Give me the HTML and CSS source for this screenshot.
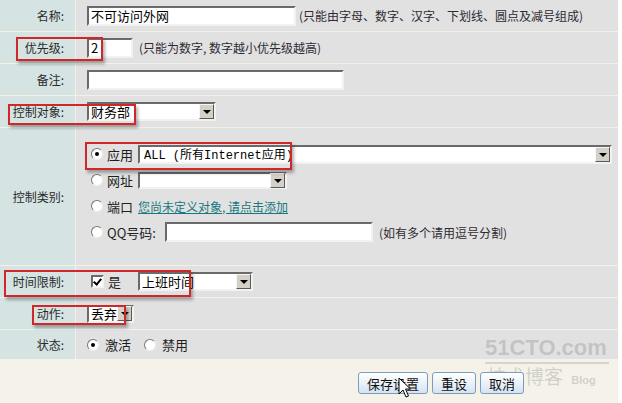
FILE: index.html
```html
<!DOCTYPE html>
<html lang="zh-CN">
<head>
  <meta charset="UTF-8">
  <title>规则设置</title>
  <link rel="stylesheet" href="styles.css">
</head>
<body>
  <div class="panel">
    <div class="form">
      <div class="row">
        <div class="label">名称:</div>
        <div class="field">
          <div class="input w-name">不可访问外网</div>
          <span class="hint">(只能由字母、数字、汉字、下划线、圆点及减号组成)</span>
        </div>
      </div>

      <div class="row">
        <div class="label">优先级:</div>
        <div class="field">
          <div class="input w-prio">2</div>
          <span class="hint gap">(只能为数字, 数字越小优先级越高)</span>
        </div>
      </div>

      <div class="row">
        <div class="label">备注:</div>
        <div class="field">
          <div class="input w-note"></div>
        </div>
      </div>

      <div class="row">
        <div class="label">控制对象:</div>
        <div class="field">
          <div class="select w-obj"><span class="val">财务部</span><span class="arrow"></span></div>
        </div>
      </div>

      <div class="row row-type">
        <div class="label">控制类别:</div>
        <div class="field stack">
          <div class="line">
            <span class="radio on"></span><span class="opt">应用</span>
            <div class="select w-app"><span class="val mono">ALL (所有Internet应用)</span><span class="arrow"></span></div>
          </div>
          <div class="line">
            <span class="radio"></span><span class="opt">网址</span>
            <div class="select w-url"><span class="val"></span><span class="arrow"></span></div>
          </div>
          <div class="line">
            <span class="radio"></span><span class="opt">端口</span>
            <a href="#" class="link">您尚未定义对象, 请点击添加</a>
          </div>
          <div class="line">
            <span class="radio"></span><span class="opt">QQ号码:</span>
            <div class="input w-qq"></div>
            <span class="hint gap">(如有多个请用逗号分割)</span>
          </div>
        </div>
      </div>

      <div class="row">
        <div class="label">时间限制:</div>
        <div class="field">
          <span class="check"></span><span class="opt">是</span>
          <div class="select w-time"><span class="val">上班时间</span><span class="arrow"></span></div>
        </div>
      </div>

      <div class="row">
        <div class="label">动作:</div>
        <div class="field">
          <div class="select w-act"><span class="val">丢弃</span><span class="arrow"></span></div>
        </div>
      </div>

      <div class="row row-last">
        <div class="label">状态:</div>
        <div class="field">
          <span class="radio on"></span><span class="opt wide">激活</span>
          <span class="radio"></span><span class="opt wide">禁用</span>
        </div>
      </div>
    </div>

    <div class="watermark">
      <div class="wm-big">51CTO.com</div>
      <div class="wm-small">技术博客 <span>Blog</span></div>
    </div>

    <div class="footer">
      <button class="btn">保存设置</button>
      <button class="btn">重设</button>
      <button class="btn">取消</button>
    </div>

    <!-- red marks drawn over the screenshot -->
    <div class="mark m1"></div>
    <div class="mark m2"></div>
    <div class="mark m3"></div>
    <div class="mark m4"></div>
    <div class="mark m5"></div>

    <svg class="cursor" width="14" height="22" viewBox="0 0 14 22">
      <path d="M1 1 L1 17 L5 13 L8 20 L10.5 19 L7.5 12 L12.5 12 Z" fill="#fff" stroke="#000" stroke-width="1"/>
    </svg>
  </div>
</body>
</html>
```

FILE: styles.css
```css
* {
  margin: 0;
  padding: 0;
  box-sizing: border-box;
}

body {
  background-color: #ffffff;
  font-family: "Noto Sans CJK SC", "DejaVu Sans", sans-serif;
  font-size: 12px;
  color: #262626;
}

.panel {
  position: relative;
  width: 618px;
  height: 403px;
}

.row {
  display: grid;
  grid-template-columns: 76px 1fr;
  height: 32px;
  border-bottom: 1px solid #f1f1e6;
}

.row-type {
  height: 138px;
}

.row-last {
  height: 29px;
  border-bottom: none;
}

.label {
  background-color: #d5e3e3;
  border-right: 1px solid #eef2ee;
  display: flex;
  align-items: center;
  justify-content: flex-end;
  padding-right: 11px;
  color: #2a2a2a;
}

.field {
  background-color: #e1e1e1;
  display: flex;
  align-items: center;
  padding-left: 11px;
}

.stack {
  flex-direction: column;
  align-items: flex-start;
  justify-content: flex-start;
  padding-top: 13px;
  padding-left: 15px;
}

.line {
  display: flex;
  align-items: center;
  height: 26px;
}

.hint {
  margin-left: 3px;
  color: #2e2a33;
}

.hint.gap {
  margin-left: 6px;
}

.input {
  height: 20px;
  background-color: #fff;
  border: 2px solid;
  border-color: #6a6a6a #f2f2f2 #f2f2f2 #6a6a6a;
  padding-left: 2px;
  line-height: 15px;
  font-size: 13px;
  color: #000;
  white-space: nowrap;
}

.w-name { width: 209px; }
.w-prio { width: 46px; }
.w-note { width: 257px; }
.w-qq { width: 208px; margin-left: 4px; }

.select {
  display: flex;
  align-items: center;
  height: 19px;
  background-color: #fff;
  border: 2px solid;
  border-color: #6a6a6a #f2f2f2 #f2f2f2 #6a6a6a;
  color: #000;
}

.select .val {
  flex: 1;
  padding-left: 2px;
  font-size: 13px;
  white-space: nowrap;
  overflow: hidden;
}

.select .mono {
  font-family: "Liberation Mono", "Noto Sans CJK SC", monospace;
  font-size: 12px;
  padding-left: 4px;
}

.arrow {
  position: relative;
  width: 15px;
  height: 15px;
  background-color: #d4d0c8;
  border: 1px solid;
  border-color: #f6f6f6 #5a5a5a #5a5a5a #f6f6f6;
}

.arrow::after {
  content: "";
  position: absolute;
  left: 3px;
  top: 5px;
  border-left: 4px solid transparent;
  border-right: 4px solid transparent;
  border-top: 4px solid #000;
}

.w-obj { width: 129px; }
.w-app { width: 474px; }
.w-url { width: 149px; height: 17px; }
.w-time { width: 115px; margin-left: 12px; }
.w-act { width: 47px; height: 18px; }

.radio {
  position: relative;
  width: 12px;
  height: 12px;
  border-radius: 50%;
  background-color: #fff;
  border: 1px solid;
  border-color: #777 #eee #eee #777;
}

.radio.on::after {
  content: "";
  position: absolute;
  left: 3px;
  top: 3px;
  width: 4px;
  height: 4px;
  border-radius: 50%;
  background-color: #000;
}

.check {
  position: relative;
  width: 13px;
  height: 13px;
  margin-left: 4px;
  background-color: #fff;
  border: 2px solid;
  border-color: #6a6a6a #f2f2f2 #f2f2f2 #6a6a6a;
}

.check::after {
  content: "";
  position: absolute;
  left: 2px;
  top: 0;
  width: 3px;
  height: 6px;
  border-right: 2px solid #000;
  border-bottom: 2px solid #000;
  transform: rotate(40deg);
}

.opt {
  margin-left: 4px;
  margin-right: 5px;
  font-size: 13px;
  color: #1e1e1e;
}

.opt.wide {
  margin-left: 6px;
  margin-right: 13px;
}

.link {
  color: #17787f;
  text-decoration: underline;
  font-size: 12px;
}

.footer {
  height: 44px;
  background-color: #f5f3e9;
  display: flex;
  justify-content: flex-end;
  align-items: center;
  gap: 4px;
  padding-right: 94px;
  padding-top: 4px;
}

.btn {
  position: relative;
  z-index: 1;
  height: 22px;
  padding: 0 8px;
  font-family: "Noto Sans CJK SC", sans-serif;
  font-size: 13px;
  color: #111;
  border: 1px solid #7d9cbd;
  border-radius: 3px;
  background: linear-gradient(#ffffff, #d6e3f1);
}

.mark {
  position: absolute;
  border: 2px solid #d0282a;
  box-shadow: 2px 3px 3px rgba(0, 0, 0, 0.3);
}

.m1 { left: 16px; top: 37px; width: 87px; height: 24px; }
.m2 { left: 8px; top: 104px; width: 128px; height: 21px; }
.m3 { left: 85px; top: 142px; width: 207px; height: 28px; }
.m4 { left: 4px; top: 270px; width: 187px; height: 27px; }
.m5 { left: 32px; top: 305px; width: 94px; height: 20px; }

.watermark {
  position: absolute;
  z-index: 0;
  left: 485px;
  top: 334px;
  width: 124px;
  color: rgba(140, 140, 140, 0.35);
  pointer-events: none;
}

.wm-big {
  font-family: "Liberation Sans", sans-serif;
  font-weight: bold;
  font-size: 22px;
  line-height: 28px;
  white-space: nowrap;
  border-bottom: 2px solid rgba(140, 140, 140, 0.3);
}

.wm-small {
  font-size: 19px;
  line-height: 24px;
  padding-left: 2px;
  white-space: nowrap;
}

.wm-small span {
  font-family: "Liberation Sans", sans-serif;
  font-size: 11px;
  font-weight: bold;
  margin-left: 4px;
}

.cursor {
  position: absolute;
  z-index: 2;
  left: 398px;
  top: 377px;
}
```
